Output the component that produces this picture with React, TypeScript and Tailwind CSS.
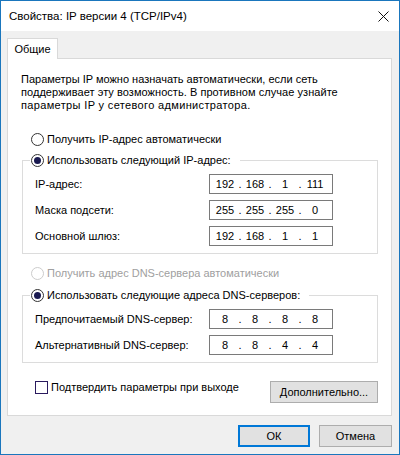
import React from 'react';

const Radio: React.FC<{ checked?: boolean; disabled?: boolean; label: string }> = ({ checked, disabled, label }) => (
  <span className={`flex items-center h-4 gap-[3px] ${disabled ? 'text-[#a0a0a0]' : 'text-black'}`}>
    <span className={`flex items-center justify-center w-[13px] h-[13px] rounded-full border bg-white ${disabled ? 'border-[#cccccc]' : 'border-[#333333]'}`}>
      {checked && <span className="w-[7px] h-[7px] rounded-full bg-[#1a1a50]"></span>}
    </span>
    <span className="whitespace-nowrap">{label}</span>
  </span>
);

const IpField: React.FC<{ label: string; parts: string[] }> = ({ label, parts }) => (
  <div className="flex items-center justify-between h-5">
    <span>{label}</span>
    <div className="flex items-center w-[124px] h-5 pl-[3px] border border-[#7a7a7a] bg-white">
      {parts.map((p, i) => (
        <React.Fragment key={i}>
          {i > 0 && <span className="w-[6px] text-center">.</span>}
          <span className="w-[24px] text-center">{p}</span>
        </React.Fragment>
      ))}
    </div>
  </div>
);

const Group: React.FC<{ label: string; children: React.ReactNode }> = ({ label, children }) => (
  <fieldset className="w-[356px] ml-[1px] border border-[#dcdcdc] pl-3 pr-[44px] pt-[6px] pb-[7px]">
    <legend className="-ml-[5px] pl-[1px] pr-[9px]">
      <Radio checked label={label} />
    </legend>
    <div className="flex flex-col gap-[6px]">{children}</div>
  </fieldset>
);

const Button: React.FC<{ label: string; primary?: boolean; className?: string }> = ({ label, primary, className }) => (
  <button className={`h-[22px] bg-[#e1e1e1] text-black ${primary ? 'border-2 border-[#0078d7]' : 'border border-[#adadad]'} ${className ?? ''}`}>
    {label}
  </button>
);

export default function App() {
  return (
    <div className="flex flex-col w-[400px] h-[455px] border border-[#1a76bd] bg-[#f0f0f0] text-[11px] leading-[13px] text-black font-['Liberation_Sans','Roboto',sans-serif] overflow-hidden">
      <header className="flex items-center justify-between h-[30px] shrink-0 bg-white pl-2 pr-[10px]">
        <span className="text-[11.5px]">Свойства: IP версии 4 (TCP/IPv4)</span>
        <svg width="11" height="11" viewBox="0 0 11 11" stroke="#111" strokeWidth="1">
          <path d="M0.5 0.5L10.5 10.5M10.5 0.5L0.5 10.5" />
        </svg>
      </header>

      <div className="pt-[7px] pl-[6px] pr-[7px]">
        <div className="flex h-[21px] items-center justify-center w-[51px] bg-white border border-b-0 border-[#d9d9d9] -mb-px relative">
          Общие
        </div>
        <div className="h-[358px] border border-[#d9d9d9] bg-white pl-[13px] pt-[14px]">
          <p className="whitespace-nowrap">
            Параметры IP можно назначать автоматически, если сеть<br />
            <span className="tracking-[0.05px]">поддерживает эту возможность. В противном случае узнайте</span><br />
            <span className="tracking-[0.35px]">параметры IP у сетевого администратора.</span>
          </p>
          <div className="mt-[19px] ml-[10px]">
            <Radio label="Получить IP-адрес автоматически" />
          </div>
          <div className="mt-[5px]">
            <Group label="Использовать следующий IP-адрес:">
              <IpField label="IP-адрес:" parts={['192', '168', '1', '111']} />
              <IpField label="Маска подсети:" parts={['255', '255', '255', '0']} />
              <IpField label="Основной шлюз:" parts={['192', '168', '1', '1']} />
            </Group>
          </div>
          <div className="mt-[11px] ml-[10px]">
            <Radio disabled label="Получить адрес DNS-сервера автоматически" />
          </div>
          <div className="mt-[6px]">
            <Group label="Использовать следующие адреса DNS-серверов:">
              <IpField label="Предпочитаемый DNS-сервер:" parts={['8', '8', '8', '8']} />
              <IpField label="Альтернативный DNS-сервер:" parts={['8', '8', '4', '4']} />
            </Group>
          </div>
          <div className="flex items-start justify-between w-[357px] mt-[18px] pl-[14px]">
            <label className="flex items-center gap-[3px] h-[12px]">
              <span className="w-[13px] h-[13px] border border-[#2a1a5e] bg-white"></span>
              Подтвердить параметры при выходе
            </label>
            <Button label="Дополнительно..." className="w-[108px]" />
          </div>
        </div>
      </div>

      <div className="flex justify-end gap-[9px] mt-[9px] pr-[7px]">
        <Button primary label="ОК" className="w-[72px]" />
        <Button label="Отмена" className="w-[73px]" />
      </div>
    </div>
  );
}
